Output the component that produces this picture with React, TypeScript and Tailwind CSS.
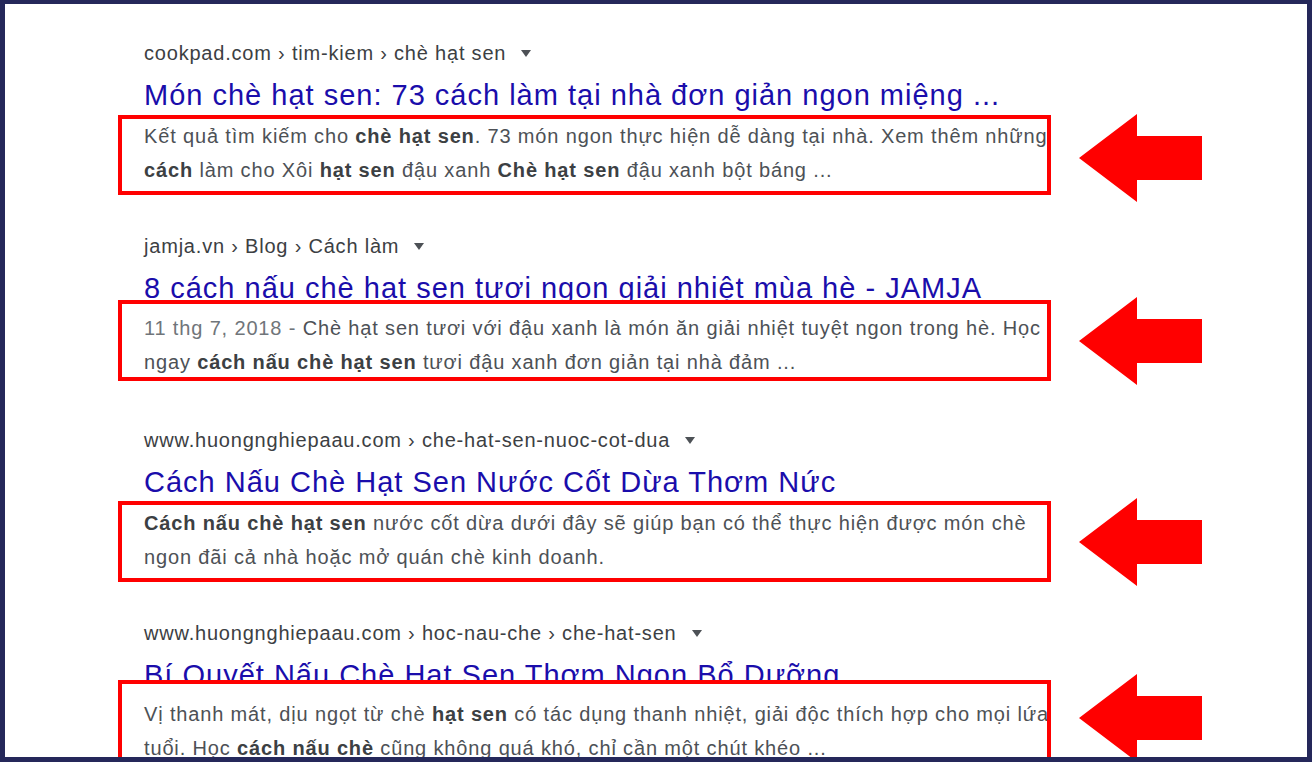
import React from "react";

type Seg = { t: string; b?: boolean; muted?: boolean };

type Result = {
  url: string;
  title: string;
  lines: Seg[][];
  gapTop: string;
  boxMt: string;
  boxH: string;
  boxPt: string;
  arrowMt: string;
};

const results: Result[] = [
  {
    url: "cookpad.com › tim-kiem › chè hạt sen",
    title: "Món chè hạt sen: 73 cách làm tại nhà đơn giản ngon miệng ...",
    lines: [
      [
        { t: "Kết quả tìm kiếm cho " },
        { t: "chè hạt sen", b: true },
        { t: ". 73 món ngon thực hiện dễ dàng tại nhà. Xem thêm những" },
      ],
      [
        { t: "cách", b: true },
        { t: " làm cho Xôi " },
        { t: "hạt sen", b: true },
        { t: " đậu xanh " },
        { t: "Chè hạt sen", b: true },
        { t: " đậu xanh bột báng ..." },
      ],
    ],
    gapTop: "mt-0",
    boxMt: "mt-[2px]",
    boxH: "h-[80px]",
    boxPt: "pt-0",
    arrowMt: "-mt-[1px]",
  },
  {
    url: "jamja.vn › Blog › Cách làm",
    title: "8 cách nấu chè hạt sen tươi ngon giải nhiệt mùa hè - JAMJA",
    lines: [
      [
        { t: "11 thg 7, 2018 - ", muted: true },
        { t: "Chè hạt sen tươi với đậu xanh là món ăn giải nhiệt tuyệt ngon trong hè. Học" },
      ],
      [
        { t: "ngay " },
        { t: "cách nấu chè hạt sen", b: true },
        { t: " tươi đậu xanh đơn giản tại nhà đảm ..." },
      ],
    ],
    gapTop: "mt-[37px]",
    boxMt: "-mt-[6px]",
    boxH: "h-[81px]",
    boxPt: "pt-[7px]",
    arrowMt: "-mt-[3px]",
  },
  {
    url: "www.huongnghiepaau.com › che-hat-sen-nuoc-cot-dua",
    title: "Cách Nấu Chè Hạt Sen Nước Cốt Dừa Thơm Nức",
    lines: [
      [
        { t: "Cách nấu chè hạt sen", b: true },
        { t: " nước cốt dừa dưới đây sẽ giúp bạn có thể thực hiện được món chè" },
      ],
      [{ t: "ngon đãi cả nhà hoặc mở quán chè kinh doanh." }],
    ],
    gapTop: "mt-[45px]",
    boxMt: "mt-[1px]",
    boxH: "h-[81px]",
    boxPt: "pt-[1px]",
    arrowMt: "-mt-[3px]",
  },
  {
    url: "www.huongnghiepaau.com › hoc-nau-che › che-hat-sen",
    title: "Bí Quyết Nấu Chè Hạt Sen Thơm Ngon Bổ Dưỡng",
    lines: [
      [
        { t: "Vị thanh mát, dịu ngọt từ chè " },
        { t: "hạt sen", b: true },
        { t: " có tác dụng thanh nhiệt, giải độc thích hợp cho mọi lứa" },
      ],
      [
        { t: "tuổi. Học " },
        { t: "cách nấu chè", b: true },
        { t: " cũng không quá khó, chỉ cần một chút khéo ..." },
      ],
    ],
    gapTop: "mt-[37px]",
    boxMt: "-mt-[13px]",
    boxH: "h-[100px]",
    boxPt: "pt-[13px]",
    arrowMt: "-mt-[6px]",
  },
];

function Arrow({ className }: { className: string }) {
  return (
    <svg width="123" height="88" viewBox="0 0 123 88" className={`shrink-0 -mb-[20px] ${className}`}>
      <polygon points="0,44 58,0 58,22 123,22 123,66 58,66 58,88" fill="#ff0000" />
    </svg>
  );
}

function Caret() {
  return (
    <svg width="10" height="7" viewBox="0 0 10 7" className="ml-[15px] inline-block">
      <polygon points="0,0 10,0 5,7" fill="#4d5156" />
    </svg>
  );
}

export default function App() {
  return (
    <div
      className="w-[1312px] h-[762px] overflow-hidden bg-white border-[#25285a] border-t-4 border-l-[5px] border-r-[5px] border-b-[5px]"
      style={{ fontFamily: '"Liberation Sans", Arial, sans-serif' }}
    >
      <div className="pl-[113px] pt-[35px]">
        {results.map((r, i) => (
          <div key={i} className={r.gapTop}>
            {/* breadcrumb */}
            <div className="pl-[26px] h-[28px] leading-[28px] text-[20px] tracking-[0.8px] text-[#3c4043] flex items-center">
              <span>{r.url}</span>
              <Caret />
            </div>
            {/* title */}
            <div className="pl-[26px] mt-[10px] h-[36px] leading-[36px] text-[29px] tracking-[1px] text-[#1a0dab] whitespace-nowrap">
              {r.title}
            </div>
            {/* snippet + arrow */}
            <div className={`flex items-start gap-[28px] relative z-10 ${r.boxMt}`}>
              <div
                className={`w-[933px] ${r.boxH} ${r.boxPt} shrink-0 bg-white border-4 border-[#ff0000] pl-[22px] overflow-hidden`}
              >
                {r.lines.map((line, j) => (
                  <div
                    key={j}
                    className="h-[34px] leading-[34px] text-[20px] tracking-[0.85px] text-[#4d5156] whitespace-nowrap"
                  >
                    {line.map((s, k) => (
                      <span
                        key={k}
                        className={s.b ? "font-bold text-[#3c4043]" : s.muted ? "text-[#70757a]" : ""}
                      >
                        {s.t}
                      </span>
                    ))}
                  </div>
                ))}
              </div>
              <Arrow className={r.arrowMt} />
            </div>
          </div>
        ))}
      </div>
    </div>
  );
}
